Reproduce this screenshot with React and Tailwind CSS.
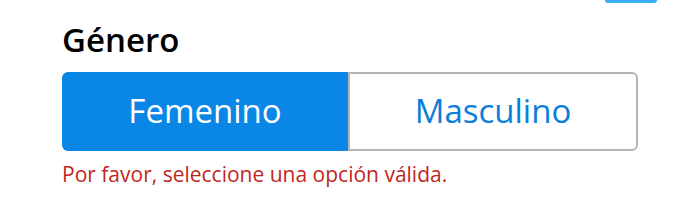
import React, { useState } from 'react';

const options = ['Femenino', 'Masculino'];

const App = () => {
  const [selected, setSelected] = useState('Femenino');

  return (
    <div className="w-[700px] h-[211px] bg-white overflow-hidden" style={{ fontFamily: '"Open Sans", "Noto Sans", sans-serif' }}>
      {/* clipped element from above */}
      <div className="flex justify-end pr-[43px]">
        <div className="w-[52px] h-[3px] rounded-b-[3px] bg-[#3aaef2]" />
      </div>

      <div className="pl-[62px] pr-[62px] pt-[18px]">
        <h2 className="text-[33px] leading-[38px] font-semibold text-black">Género</h2>

        <div className="mt-[13px] flex w-[576px] h-[79px]">
          {options.map((opt, i) => {
            const active = selected === opt;
            return (
              <button
                key={opt}
                onClick={() => setSelected(opt)}
                className={`flex-1 flex items-center justify-center text-[33px] pb-[2px] ${
                  i === 0 ? 'rounded-l-[6px]' : 'rounded-r-[6px]'
                } ${
                  active
                    ? 'bg-[#0a87e6] text-white'
                    : 'bg-white text-[#0a7ed8] border-2 border-[#b5b5b5]'
                }`}
              >
                {opt}
              </button>
            );
          })}
        </div>

        <p className="mt-[8px] text-[21px] leading-[30px] text-[#c0271c]">
          Por favor, seleccione una opción válida.
        </p>
      </div>
    </div>
  );
};

export default App;
